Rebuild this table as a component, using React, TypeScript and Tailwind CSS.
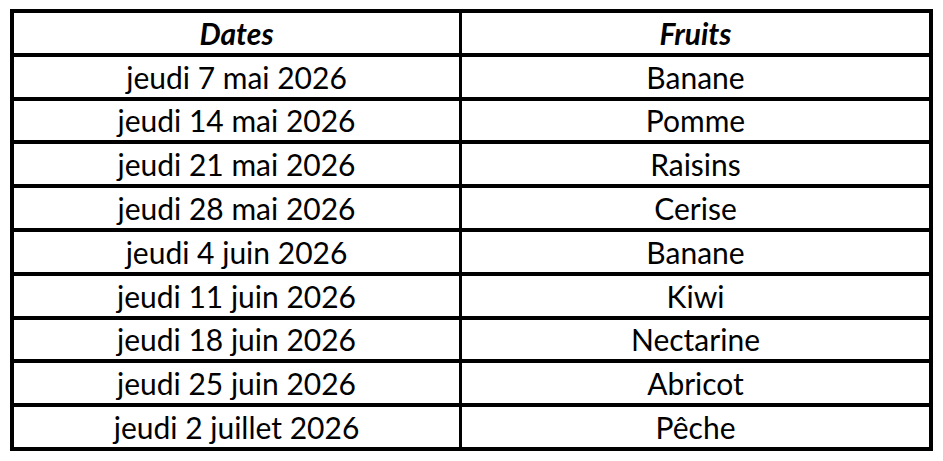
const rows = [
  ["jeudi 7 mai 2026", "Banane"],
  ["jeudi 14 mai 2026", "Pomme"],
  ["jeudi 21 mai 2026", "Raisins"],
  ["jeudi 28 mai 2026", "Cerise"],
  ["jeudi 4 juin 2026", "Banane"],
  ["jeudi 11 juin 2026", "Kiwi"],
  ["jeudi 18 juin 2026", "Nectarine"],
  ["jeudi 25 juin 2026", "Abricot"],
  ["jeudi 2 juillet 2026", "Pêche"],
]

const Row = ({ left, right, head }: { left: string; right: string; head?: boolean }) => (
  <div className={`flex ${head ? "h-[39.8px]" : "h-[43.8px] border-t-4 border-black"}`}>
    <div className="w-[448px] border-r-[3px] border-black flex items-center justify-center">
      <span className={head ? "font-bold italic" : ""}>{left}</span>
    </div>
    <div className="flex-1 flex items-center justify-center">
      <span className={head ? "font-bold italic" : ""}>{right}</span>
    </div>
  </div>
)

export default function App() {
  return (
    <div className="w-[943px] h-[461px] bg-white pt-[9px] pl-[10px] text-black text-[30px] leading-none font-['Lato',sans-serif]">
      <div className="w-[923px] border-4 border-black">
        <Row left="Dates" right="Fruits" head />
        {rows.map(([d, f]) => (
          <Row key={d} left={d} right={f} />
        ))}
      </div>
    </div>
  )
}
